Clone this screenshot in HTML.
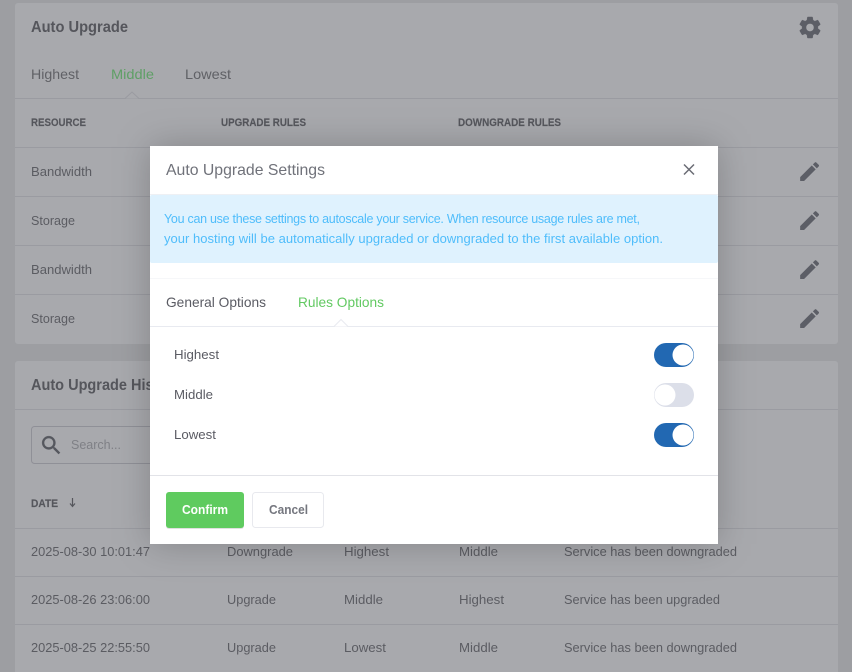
<!DOCTYPE html>
<html><head><meta charset="utf-8"><title>Auto Upgrade Settings</title>
<style>
html,body{margin:0;padding:0;background:#9d9ea2;width:852px;height:672px;overflow:hidden}
svg{display:block;position:absolute;left:0;top:0}
text{font-family:"Liberation Sans",Arial,sans-serif;white-space:pre}
.bg{fill:#5b5c62;font-size:13px}
.h{fill:#55565c;font-size:16px;font-weight:bold}
.th{fill:#55565c;font-size:11px;font-weight:bold;stroke:#55565c;stroke-width:.15}
.tb{fill:#606166;font-size:14px}
.m{fill:#5a5b63;font-size:13px}
.ln{fill:#9a9ba1}
.al{fill:#4fbdfb;font-size:13px}
</style></head><body>
<svg width="852" height="672" viewBox="0 0 852 672" xmlns="http://www.w3.org/2000/svg">
<defs><filter id="b" x="-30%" y="-30%" width="160%" height="160%"><feGaussianBlur stdDeviation="18"/></filter></defs>
<rect width="852" height="672" fill="#9d9ea2"/>
<rect x="15" y="3" width="823" height="341" rx="3" fill="#a8a9ad"/>
<rect x="15" y="361" width="823" height="330" rx="3" fill="#a8a9ad"/>
<g class="ln">
<rect x="15" y="98" width="823" height="1"/><rect x="15" y="147" width="823" height="1"/><rect x="15" y="196" width="823" height="1"/><rect x="15" y="245" width="823" height="1"/><rect x="15" y="294" width="823" height="1"/>
<rect x="15" y="409" width="823" height="1"/><rect x="15" y="528" width="823" height="1"/><rect x="15" y="576" width="823" height="1"/><rect x="15" y="624" width="823" height="1"/>
</g>
<path d="M125 98.500L132 92L139 98.500" fill="#a8a9ad" stroke="#9a9ba1"/>
<text x="31" y="32" class="h" textLength="97" lengthAdjust="spacingAndGlyphs">Auto Upgrade</text>
<text x="31" y="79" class="tb" textLength="48" lengthAdjust="spacingAndGlyphs">Highest</text>
<text x="111" y="79" class="tb" style="fill:#5f9f66" textLength="43" lengthAdjust="spacingAndGlyphs">Middle</text>
<text x="185" y="79" class="tb" textLength="46" lengthAdjust="spacingAndGlyphs">Lowest</text>
<text x="31" y="126" class="th" textLength="55" lengthAdjust="spacingAndGlyphs">RESOURCE</text>
<text x="221" y="126" class="th" textLength="85" lengthAdjust="spacingAndGlyphs">UPGRADE RULES</text>
<text x="458" y="126" class="th" textLength="103" lengthAdjust="spacingAndGlyphs">DOWNGRADE RULES</text>
<text x="31" y="176" class="bg" textLength="61" lengthAdjust="spacingAndGlyphs">Bandwidth</text>
<text x="31" y="225" class="bg" textLength="44" lengthAdjust="spacingAndGlyphs">Storage</text>
<text x="31" y="274" class="bg" textLength="61" lengthAdjust="spacingAndGlyphs">Bandwidth</text>
<text x="31" y="323" class="bg" textLength="44" lengthAdjust="spacingAndGlyphs">Storage</text>
<g fill="#5c5e66">
<path stroke="#5c5e66" stroke-width=".35" transform="translate(796.800,14.300) scale(1.1)" d="M19.140 12.940c.04-.3.06-.61.06-.94 0-.32-.02-.64-.07-.94l2.030-1.580c.18-.14.23-.41.12-.61l-1.920-3.320c-.12-.22-.37-.29-.59-.22l-2.390.96c-.5-.38-1.030-.7-1.620-.94l-.36-2.540c-.04-.24-.24-.41-.48-.41h-3.840c-.24 0-.43.17-.47.41l-.36 2.540c-.59.24-1.130.57-1.620.94l-2.390-.96c-.22-.08-.47 0-.59.22L2.740 8.870c-.12.21-.08.47.12.61l2.030 1.580c-.05.3-.09.63-.09.94s.02.64.07.94l-2.030 1.580c-.18.14-.23.41-.12.61l1.920 3.320c.12.22.37.29.59.22l2.390-.96c.5.38 1.030.7 1.620.94l.36 2.540c.05.24.24.41.48.41h3.840c.24 0 .44-.17.47-.41l.36-2.540c.59-.24 1.130-.56 1.620-.94l2.390.96c.22.08.47 0 .59-.22l1.920-3.320c.12-.22.07-.47-.12-.61l-2.010-1.580zM12 15.600c-1.980 0-3.600-1.620-3.600-3.600s1.620-3.600 3.600-3.600 3.600 1.620 3.600 3.600-1.620 3.600-3.600 3.600z"/>
<path transform="translate(797,159) scale(1.05)" d="M3 17.250V21h3.750L17.810 9.940l-3.750-3.750L3 17.250zM20.710 7.040c.39-.39.39-1.020 0-1.410l-2.340-2.340c-.39-.39-1.020-.39-1.410 0l-1.830 1.830 3.750 3.750 1.830-1.830z"/>
<path transform="translate(797,208) scale(1.05)" d="M3 17.250V21h3.750L17.810 9.940l-3.750-3.750L3 17.250zM20.710 7.040c.39-.39.39-1.020 0-1.410l-2.340-2.340c-.39-.39-1.020-.39-1.410 0l-1.830 1.830 3.750 3.750 1.830-1.830z"/>
<path transform="translate(797,257) scale(1.05)" d="M3 17.250V21h3.750L17.810 9.940l-3.750-3.750L3 17.250zM20.710 7.040c.39-.39.39-1.020 0-1.410l-2.340-2.340c-.39-.39-1.020-.39-1.410 0l-1.830 1.830 3.750 3.750 1.830-1.830z"/>
<path transform="translate(797,306) scale(1.05)" d="M3 17.250V21h3.750L17.810 9.940l-3.750-3.750L3 17.250zM20.710 7.040c.39-.39.39-1.020 0-1.410l-2.340-2.340c-.39-.39-1.020-.39-1.410 0l-1.830 1.830 3.750 3.750 1.830-1.830z"/>
</g>
<text x="31" y="390" class="h" textLength="150" lengthAdjust="spacingAndGlyphs">Auto Upgrade History</text>
<rect x="31.500" y="426.500" width="200" height="37" rx="3" fill="#a8a9ad" stroke="#8f9097"/>
<path fill="#55575e" stroke="#55575e" stroke-width=".3" transform="translate(39,433) scale(1.03)" d="M15.500 14h-.79l-.28-.27C15.410 12.590 16 11.110 16 9.500 16 5.910 13.090 3 9.500 3S3 5.910 3 9.500 5.910 16 9.500 16c1.610 0 3.090-.59 4.230-1.570l.27.28v.79l5 4.990L20.490 19l-4.990-5zm-6 0C7.010 14 5 11.990 5 9.500S7.010 5 9.500 5 14 7.010 14 9.500 11.990 14 9.500 14z"/>
<text x="71" y="449" class="bg" style="fill:#7f8086" textLength="50" lengthAdjust="spacingAndGlyphs">Search...</text>
<text x="31" y="507" class="th" textLength="27" lengthAdjust="spacingAndGlyphs">DATE</text>
<path d="M72.500 498v8M70 503.500l2.500 3 2.500-3" fill="none" stroke="#55565c" stroke-width="1.200"/>
<g class="bg">
<text x="31" y="556" textLength="119" lengthAdjust="spacingAndGlyphs">2025-08-30 10:01:47</text>
<text x="227" y="556" textLength="66" lengthAdjust="spacingAndGlyphs">Downgrade</text>
<text x="344" y="556" textLength="45" lengthAdjust="spacingAndGlyphs">Highest</text>
<text x="459" y="556" textLength="39" lengthAdjust="spacingAndGlyphs">Middle</text>
<text x="564" y="556" textLength="173" lengthAdjust="spacingAndGlyphs">Service has been downgraded</text>
<text x="31" y="604" textLength="119" lengthAdjust="spacingAndGlyphs">2025-08-26 23:06:00</text>
<text x="227" y="604" textLength="49" lengthAdjust="spacingAndGlyphs">Upgrade</text>
<text x="344" y="604" textLength="39" lengthAdjust="spacingAndGlyphs">Middle</text>
<text x="459" y="604" textLength="45" lengthAdjust="spacingAndGlyphs">Highest</text>
<text x="564" y="604" textLength="156" lengthAdjust="spacingAndGlyphs">Service has been upgraded</text>
<text x="31" y="652" textLength="119" lengthAdjust="spacingAndGlyphs">2025-08-25 22:55:50</text>
<text x="227" y="652" textLength="49" lengthAdjust="spacingAndGlyphs">Upgrade</text>
<text x="344" y="652" textLength="42" lengthAdjust="spacingAndGlyphs">Lowest</text>
<text x="459" y="652" textLength="39" lengthAdjust="spacingAndGlyphs">Middle</text>
<text x="564" y="652" textLength="173" lengthAdjust="spacingAndGlyphs">Service has been downgraded</text>
</g>

<rect x="150" y="146" width="568" height="398" fill="#000" fill-opacity=".22" filter="url(#b)"/>
<rect x="150" y="146" width="568" height="398" fill="#fff"/>
<text x="166" y="175" style="fill:#70727a;font-size:16px" textLength="159" lengthAdjust="spacingAndGlyphs">Auto Upgrade Settings</text>
<path d="M684 164.500l10 10M694 164.500l-10 10" stroke="#6a6c74" stroke-width="1.500" fill="none"/>
<rect x="150" y="194" width="568" height="1" fill="#eef0f4"/>
<rect x="150" y="195" width="568" height="68" rx="2" fill="#dff2fe"/>
<text x="164" y="223" class="al" style="font-size:12.500px" textLength="476" lengthAdjust="spacing">You can use these settings to autoscale your service. When resource usage rules are met,</text>
<text x="164" y="243" class="al" textLength="499" lengthAdjust="spacing">your hosting will be automatically upgraded or downgraded to the first available option.</text>
<rect x="150" y="278" width="568" height="1" fill="#f6f7f9"/>
<text x="166" y="307" style="fill:#5a5b63;font-size:14px" textLength="100" lengthAdjust="spacingAndGlyphs">General Options</text>
<text x="298" y="307" style="fill:#62c962;font-size:14px" textLength="86" lengthAdjust="spacingAndGlyphs">Rules Options</text>
<rect x="150" y="326" width="568" height="1" fill="#e8eaf0"/>
<path d="M334 326.500L341 319.500L348 326.500" fill="#fff" stroke="#e8eaf0"/>
<text x="174" y="359" class="m" textLength="45" lengthAdjust="spacingAndGlyphs">Highest</text>
<text x="174" y="399" class="m" textLength="39" lengthAdjust="spacingAndGlyphs">Middle</text>
<text x="174" y="439" class="m" textLength="42" lengthAdjust="spacingAndGlyphs">Lowest</text>
<rect x="654" y="343" width="40" height="24" rx="12" fill="#2268b2"/><circle cx="683" cy="355" r="10.500" fill="#fff"/>
<rect x="654" y="383" width="40" height="24" rx="12" fill="#dcdfe9"/><circle cx="665" cy="395" r="10.500" fill="#fff"/>
<rect x="654" y="423" width="40" height="24" rx="12" fill="#2268b2"/><circle cx="683" cy="435" r="10.500" fill="#fff"/>
<rect x="150" y="475" width="568" height="1" fill="#e2e3e8"/>
<rect x="166" y="493" width="78" height="36" rx="3" fill="#000" fill-opacity=".12"/>
<rect x="166" y="492" width="78" height="36" rx="3" fill="#5fcb5f"/>
<text x="182" y="514" style="fill:#fff;font-size:12.500px;font-weight:bold" textLength="46" lengthAdjust="spacingAndGlyphs">Confirm</text>
<rect x="252.500" y="492.500" width="71" height="35" rx="3" fill="#fff" stroke="#e8e9ee"/>
<text x="269" y="514" style="fill:#74767e;font-size:12.500px;font-weight:bold" textLength="39" lengthAdjust="spacingAndGlyphs">Cancel</text>
</svg>
</body></html>
